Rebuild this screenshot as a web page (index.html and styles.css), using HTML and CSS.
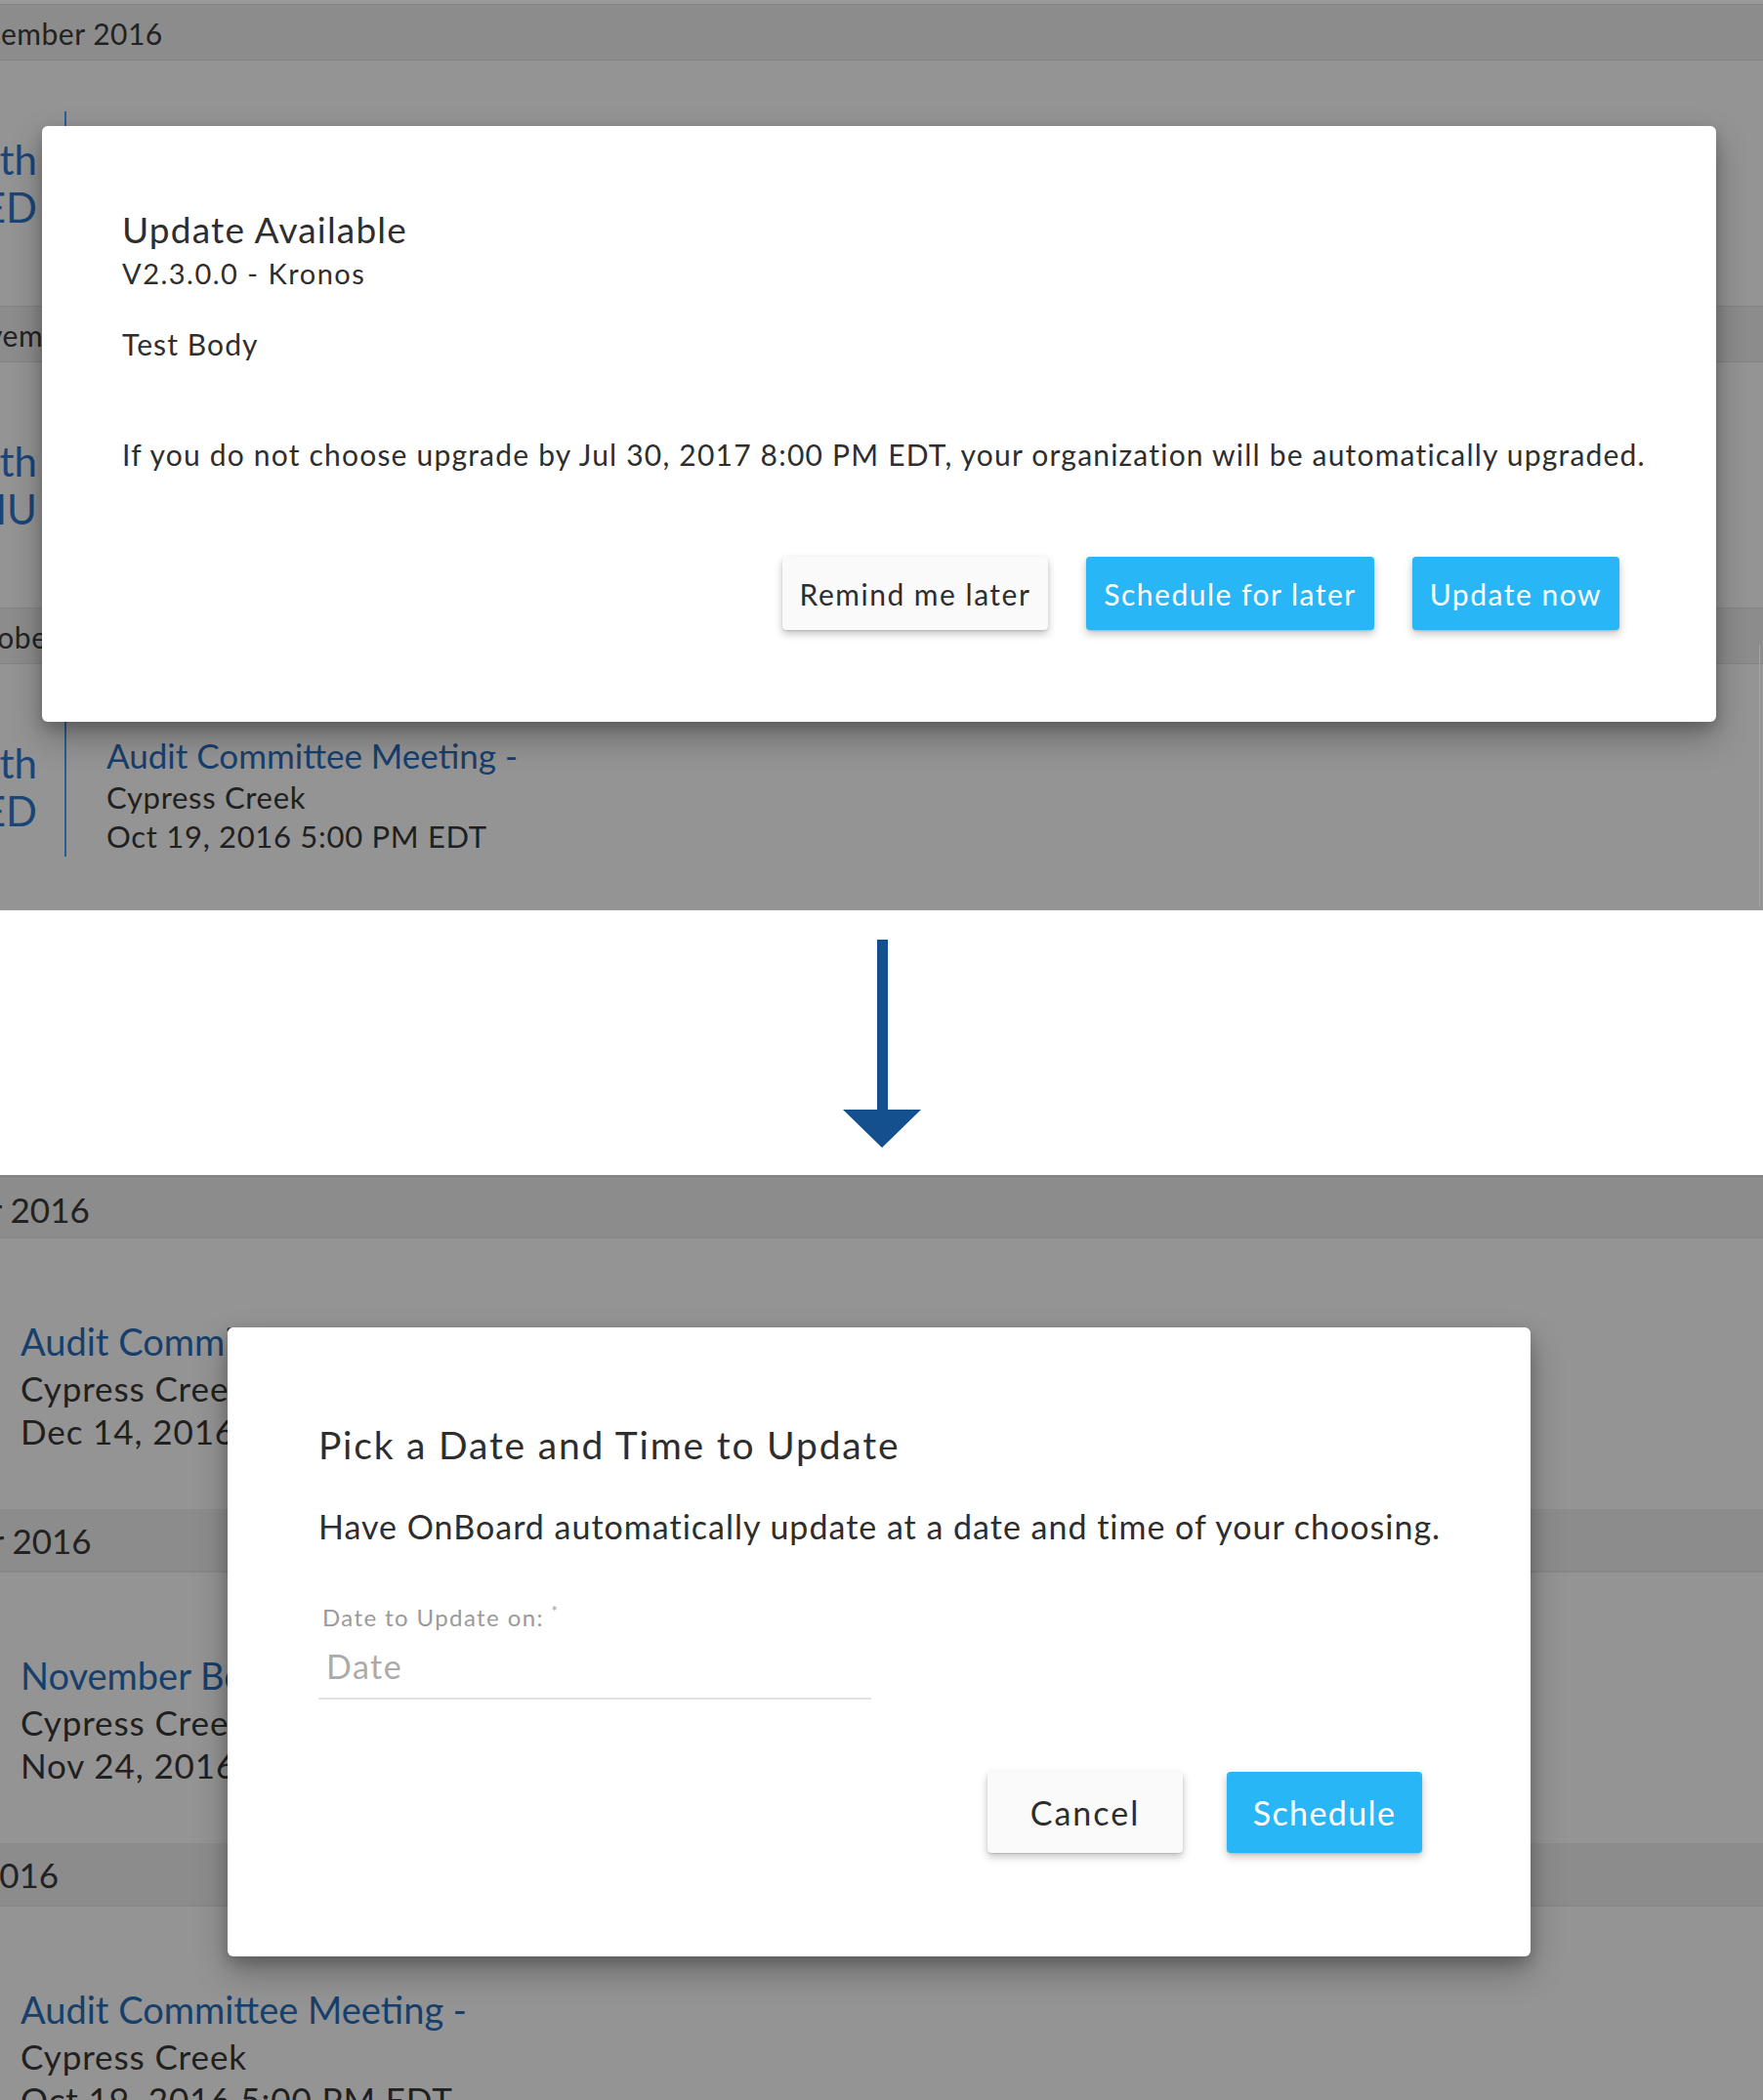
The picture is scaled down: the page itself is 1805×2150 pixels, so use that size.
FILE: index.html
```html
<!DOCTYPE html>
<html lang="en">
<head>
<meta charset="utf-8">
<title>Update flow</title>
<link rel="stylesheet" href="styles.css">
</head>
<body>
<div class="page">

  <section class="screen screen-a">
    <div class="list list-a">
      <div class="month month-a"><span class="month-text">December 2016</span></div>
      <div class="event event-a">
        <div class="date"><span class="day">14th</span><span class="dow">WED</span></div>
        <div class="rule"></div>
        <div class="info">
          <a class="title">Audit Committee Meeting -</a>
          <span class="line">Cypress Creek</span>
          <span class="line">Dec 14, 2016 5:00 PM EST</span>
        </div>
      </div>
      <div class="month month-a"><span class="month-text">November 2016</span></div>
      <div class="event event-a">
        <div class="date"><span class="day">24th</span><span class="dow">THU</span></div>
        <div class="rule"></div>
        <div class="info">
          <a class="title">November Board Meeting -</a>
          <span class="line">Cypress Creek</span>
          <span class="line">Nov 24, 2016 5:00 PM EST</span>
        </div>
      </div>
      <div class="month month-a"><span class="month-text">October 2016</span></div>
      <div class="event event-a">
        <div class="date"><span class="day">19th</span><span class="dow">WED</span></div>
        <div class="rule"></div>
        <div class="info">
          <a class="title">Audit Committee Meeting -</a>
          <span class="line">Cypress Creek</span>
          <span class="line">Oct 19, 2016 5:00 PM EDT</span>
        </div>
      </div>
    </div>
    <div class="scroll-edge"></div>

    <div class="dialog dialog-a">
      <h2 class="d-title">Update Available</h2>
      <p class="d-version">V2.3.0.0 - Kronos</p>
      <p class="d-body">Test Body</p>
      <p class="d-note">If you do not choose upgrade by Jul 30, 2017 8:00 PM EDT, your organization will be automatically upgraded.</p>
      <div class="actions actions-a">
        <button class="btn btn-plain">Remind me later</button>
        <button class="btn btn-primary">Schedule for later</button>
        <button class="btn btn-primary">Update now</button>
      </div>
    </div>
  </section>

  <div class="transition">
    <svg class="arrow" width="80" height="213" viewBox="0 0 80 213" aria-hidden="true">
      <rect x="35" y="0" width="11" height="176" fill="#15508e"/>
      <polygon points="0,174 80,174 40,213" fill="#15508e"/>
    </svg>
  </div>

  <section class="screen screen-b">
    <div class="list list-b">
      <div class="month month-b"><span class="month-text">December 2016</span></div>
      <div class="event event-b">
        <div class="info">
          <a class="title">Audit Committee Meeting -</a>
          <span class="line">Cypress Creek</span>
          <span class="line">Dec 14, 2016 5:00 PM EST</span>
        </div>
      </div>
      <div class="month month-b"><span class="month-text">November 2016</span></div>
      <div class="event event-b">
        <div class="info">
          <a class="title">November Board Meeting -</a>
          <span class="line">Cypress Creek</span>
          <span class="line">Nov 24, 2016 5:00 PM EST</span>
        </div>
      </div>
      <div class="month month-b"><span class="month-text">October 2016</span></div>
      <div class="event event-b">
        <div class="info">
          <a class="title">Audit Committee Meeting -</a>
          <span class="line">Cypress Creek</span>
          <span class="line">Oct 19, 2016 5:00 PM EDT</span>
        </div>
      </div>
    </div>

    <div class="dialog dialog-b">
      <h2 class="p-title">Pick a Date and Time to Update</h2>
      <p class="p-desc">Have OnBoard automatically update at a date and time of your choosing.</p>
      <div class="field">
        <label class="field-label">Date to Update on: <sup>*</sup></label>
        <div class="field-input">Date</div>
      </div>
      <div class="actions actions-b">
        <button class="btn btn-plain btn-lg btn-cancel">Cancel</button>
        <button class="btn btn-primary btn-lg btn-schedule">Schedule</button>
      </div>
    </div>
  </section>

</div>
</body>
</html>
```
FILE: styles.css
```css
* { box-sizing: border-box; }

html, body {
  margin: 0;
  padding: 0;
  background: #ffffff;
}

body {
  font-family: Lato, "Open Sans", "Liberation Sans", sans-serif;
  color: #333333;
  width: 1805px;
  height: 2150px;
  overflow: hidden;
}

.page {
  width: 1805px;
}

/* ---------- screens (dimmed app behind a dialog) ---------- */
.screen {
  position: relative;
  width: 1805px;
  overflow: hidden;
  background: #949494;
}

.screen-a { height: 932px; background: #999999; }
.screen-b { height: 947px; }

.list { width: 100%; }

.list-a {
  padding-top: 4px;
}

.month {
  background: #8c8c8c;
  color: #222222;
  white-space: nowrap;
  overflow: hidden;
}

.month-a {
  height: 58px;
  border-top: 1px solid #848484;
  border-bottom: 1px solid #848484;
  font-size: 30px;
  letter-spacing: 0.5px;
  line-height: 56px;
  padding-top: 1px;
}

.month-a .month-text { display: block; margin-left: -53px; }

.event {
  display: flex;
  align-items: flex-start;
  background: #949494;
}

.event-a { height: 251px; }

.date {
  flex: 0 0 238px;
  margin-left: -200px;
  padding-top: 77px;
  display: flex;
  flex-direction: column;
  align-items: flex-end;
  color: #1a4576;
  font-size: 42px;
  line-height: 49px;
  white-space: nowrap;
}

.rule {
  flex: 0 0 2px;
  margin-left: 28px;
  margin-top: 52px;
  height: 145px;
  background: #285f8e;
}

.info {
  display: flex;
  flex-direction: column;
  white-space: nowrap;
}

.event-a .info {
  margin-left: 41px;
  padding-top: 70px;
}

.title {
  color: #173f6c;
}

.event-a .title { font-size: 35px; line-height: 46px; }
.event-a .line { font-size: 31px; line-height: 40px; letter-spacing: 0.7px; color: #202020; }

.scroll-edge {
  position: absolute;
  right: 3px;
  top: 660px;
  width: 1px;
  height: 268px;
  background: #a2a2a2;
}

/* bottom list */
.list-b {
  border-top: 3px solid #858585;
}

.month-b {
  height: 65px;
  border-bottom: 2px solid #878787;
  font-size: 35px;
  line-height: 59px;
  padding-top: 3px;
}

.list-b .month:first-child { height: 62px; }

.month-b .month-text { display: block; margin-left: -157px; }

.event-b { height: 277px; }

.event-b .info {
  padding-left: 21px;
  padding-top: 80px;
}

.event-b .title { font-size: 38px; line-height: 51px; }
.event-b .line { font-size: 35px; line-height: 44px; letter-spacing: 0.9px; color: #202020; }

/* ---------- dialogs ---------- */
.dialog {
  position: absolute;
  background: #ffffff;
  border-radius: 6px;
  box-shadow: 0 16px 34px rgba(0, 0, 0, 0.28), 0 6px 14px rgba(0, 0, 0, 0.18);
}

.dialog h2, .dialog p { margin: 0; font-weight: 400; }

.dialog-a {
  left: 43px;
  top: 129px;
  width: 1714px;
  padding: 84px 99px 94px 82px;
  line-height: 1.2;
}

.d-title { font-size: 37px; letter-spacing: 1.2px; color: #2e2e2e; }
.dialog .d-version { font-size: 29px; letter-spacing: 1.5px; margin-top: 6px; color: #2e2e2e; }
.dialog .d-body { font-size: 30px; letter-spacing: 1.1px; margin-top: 36px; color: #2e2e2e; }
.dialog .d-note { font-size: 30px; letter-spacing: 1.2px; margin-top: 77px; color: #2e2e2e; white-space: nowrap; }

.actions {
  display: flex;
  justify-content: flex-end;
}

.actions-a { margin-top: 87px; gap: 39px; }

.btn {
  font-family: inherit;
  border: none;
  border-radius: 4px;
  cursor: pointer;
  box-shadow: 0 4px 8px rgba(0, 0, 0, 0.24), 0 1px 2px rgba(0, 0, 0, 0.12);
  height: 75px;
  padding: 0 18px;
  font-size: 30px;
  letter-spacing: 1.5px;
  white-space: nowrap;
}

.btn-plain { background: #fafafa; color: #2e2e2e; }
.btn-primary { background: #29b6f6; color: #ffffff; }

.btn-lg {
  height: 83px;
  min-width: 200px;
  font-size: 34px;
}

.btn-cancel { letter-spacing: 2px; }
.btn-schedule { letter-spacing: 1.4px; }

.dialog-b {
  left: 233px;
  top: 156px;
  width: 1334px;
  padding: 97px 111px 106px 93px;
  line-height: 1.2;
}

.p-title { font-size: 39px; letter-spacing: 1.8px; color: #2e2e2e; }
.dialog .p-desc { font-size: 34px; letter-spacing: 1px; margin-top: 40px; color: #2e2e2e; white-space: nowrap; }

.field {
  margin-top: 58px;
  width: 566px;
}

.field-label {
  display: block;
  font-size: 24px;
  letter-spacing: 1.4px;
  color: #9a9a9a;
  padding-left: 4px;
}

.field-label sup { font-size: 15px; vertical-align: 10px; line-height: 0; }

.field-input {
  margin-top: 16px;
  font-size: 34px;
  letter-spacing: 1.5px;
  color: #ababab;
  padding: 0 0 11px 8px;
  border-bottom: 2px solid #e2e2e2;
}

.actions-b { margin-top: 74px; gap: 45px; }

/* ---------- transition arrow ---------- */
.transition {
  height: 271px;
  background: #ffffff;
  display: flex;
  justify-content: center;
  padding-top: 30px;
  padding-left: 1px;
}

.arrow { display: block; }
```
